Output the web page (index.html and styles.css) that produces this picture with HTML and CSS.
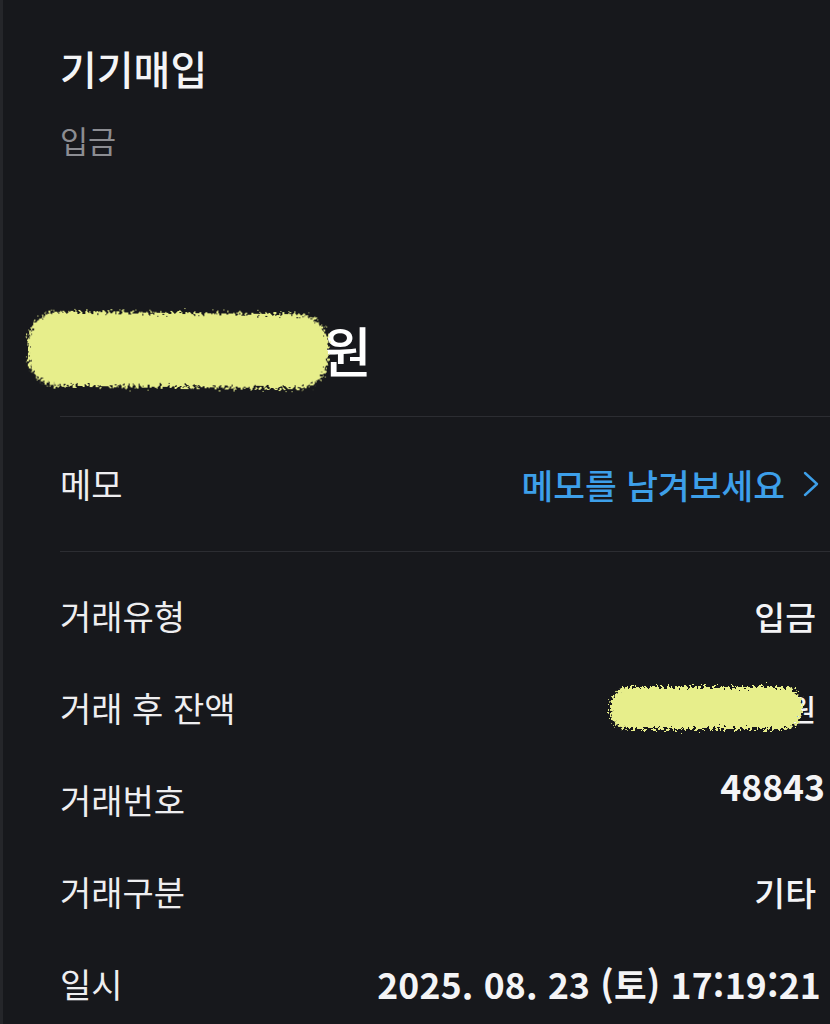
FILE: index.html
```html
<!DOCTYPE html>
<html lang="ko">
<head>
<meta charset="utf-8">
<link rel="stylesheet" href="styles.css">
</head>
<body>
<svg class="defs" width="0" height="0" aria-hidden="true">
  <filter id="rough" x="-10%" y="-20%" width="120%" height="140%">
    <feTurbulence type="fractalNoise" baseFrequency="0.35" numOctaves="3" seed="4" result="noise"/>
    <feDisplacementMap in="SourceGraphic" in2="noise" scale="14" xChannelSelector="R" yChannelSelector="G"/>
  </filter>
</svg>
<main class="page">
  <header class="head">
    <h1 class="title">기기매입</h1>
    <p class="subtitle">입금</p>
  </header>

  <section class="amount">
    <span class="blob blob-big"></span><span class="won-big">원</span>
  </section>

  <div class="divider"></div>

  <section class="memo">
    <span class="label">메모</span>
    <a class="memo-link">메모를 남겨보세요
      <svg class="chev" width="18" height="28" viewBox="0 0 18 28"><polyline points="3,3 15,14 3,25" fill="none" stroke="#3d9fe9" stroke-width="2.4" stroke-linecap="round" stroke-linejoin="round"/></svg>
    </a>
  </section>

  <div class="divider"></div>

  <section class="details">
    <div class="row"><span class="label">거래유형</span><span class="value">입금</span></div>
    <div class="row"><span class="label">거래 후 잔액</span><span class="value bal"><span class="blob blob-small"></span><span class="won-small">원</span></span></div>
    <div class="row"><span class="label">거래번호</span><span class="value num">48843</span></div>
    <div class="row"><span class="label">거래구분</span><span class="value">기타</span></div>
    <div class="row"><span class="label">일시</span><span class="value date">2025. 08. 23 (토) 17:19:21</span></div>
  </section>
</main>
</body>
</html>
```

FILE: styles.css
```css
html, body {
  margin: 0;
  padding: 0;
  background: #17181c;
}
body {
  border-left: 3px solid #25262a;
  min-height: 1024px;
  box-sizing: border-box;
  font-family: "Noto Sans CJK KR", "Noto Sans", sans-serif;
  color: #f2f2f4;
  overflow: hidden;
}
.defs { position: absolute; }
.page {
  padding: 0 8px 0 57px;
}
.head {
  padding-top: 41px;
}
.title {
  margin: 0;
  font-size: 40px;
  line-height: 54px;
  font-weight: 500;
  color: #f4f4f6;
}
.subtitle {
  margin: 24px 0 0;
  font-size: 30.5px;
  line-height: 42px;
  color: #8c8d92;
}
.amount {
  margin-top: 144px;
  height: 90px;
  display: flex;
  align-items: center;
}
.blob {
  display: inline-block;
  background: #e7ee8b;
  border-radius: 30px;
  filter: url(#rough);
}
.blob-big {
  width: 300px;
  height: 74px;
  margin-left: -32px;
  margin-right: -6px;
  transform: rotate(0.6deg);
}
.won-big {
  font-size: 54px;
  font-weight: 500;
  color: #ffffff;
  line-height: 1;
}
.divider {
  height: 1px;
  background: #2c2d32;
  margin-right: -8px;
}
.amount + .divider { margin-top: 21px; }
.memo {
  height: 134px;
  display: flex;
  align-items: center;
  justify-content: space-between;
}
.label {
  font-size: 34px;
  line-height: 46px;
  color: #eeeef0;
}
.memo-link {
  display: flex;
  align-items: center;
  gap: 17px;
  font-size: 34.5px;
  line-height: 46px;
  font-weight: 500;
  color: #3d9fe9;
  margin-right: 2px;
}
.details {
  padding-top: 18px;
}
.row {
  height: 92px;
  display: flex;
  align-items: center;
  justify-content: space-between;
}
.value {
  font-size: 33.5px;
  line-height: 46px;
  font-weight: 500;
  color: #f4f4f6;
  margin-right: 6px;
}
.bal {
  display: flex;
  align-items: center;
}
.blob-small {
  width: 192px;
  height: 42px;
  border-radius: 18px;
  margin-right: -14px;
}
.won-small {
  font-size: 30px;
  font-weight: 500;
}
.num {
  font-size: 35.5px;
  margin-right: -3px;
  margin-bottom: 28px;
  font-weight: 600;
}
.date {
  font-size: 35.5px;
  font-weight: 600;
  letter-spacing: 0.2px;
  margin-right: 1px;
}
```
